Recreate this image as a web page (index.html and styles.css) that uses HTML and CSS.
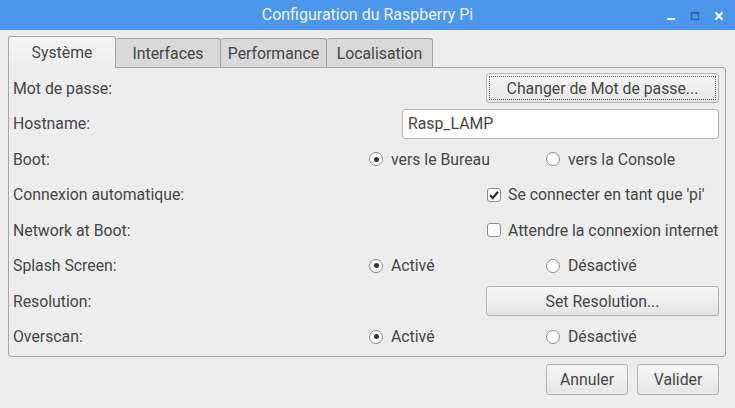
FILE: index.html
```html
<!DOCTYPE html>
<html lang="fr">
<head>
<meta charset="UTF-8" />
<title>Configuration du Raspberry Pi</title>
<link rel="stylesheet" href="styles.css">
</head>
<body>
<div class="window">
  <header class="titlebar">
    <span></span>
    <h1>Configuration du Raspberry Pi</h1>
    <div class="controls">
      <svg width="10" height="10" viewBox="0 0 10 10"><rect x="1" y="7" width="8" height="2" fill="#fff"/></svg>
      <svg width="10" height="10" viewBox="0 0 10 10"><rect x="1.5" y="1.5" width="7" height="7" fill="none" stroke="#3565a6" stroke-width="1.2"/><rect x="1" y="1" width="8" height="2" fill="#3565a6"/></svg>
      <svg width="10" height="10" viewBox="0 0 10 10"><path d="M1.5 1.5 L8.5 8.5 M8.5 1.5 L1.5 8.5" stroke="#fff" stroke-width="2"/></svg>
    </div>
  </header>

  <nav class="tabs">
    <div class="tab active">Système</div>
    <div class="tab">Interfaces</div>
    <div class="tab">Performance</div>
    <div class="tab">Localisation</div>
  </nav>

  <section class="panel">
    <div class="row">
      <span class="label">Mot de passe:</span>
      <button class="btn wide focused">Changer de Mot de passe...</button>
    </div>
    <div class="row">
      <span class="label">Hostname:</span>
      <input class="entry" type="text" value="Rasp_LAMP" />
    </div>
    <div class="row">
      <span class="label">Boot:</span>
      <div class="choices">
        <label class="radio"><span class="dot checked"></span>vers le Bureau</label>
        <label class="radio"><span class="dot"></span>vers la Console</label>
      </div>
    </div>
    <div class="row">
      <span class="label">Connexion automatique:</span>
      <label class="check"><span class="box checked">
        <svg width="12" height="12" viewBox="0 0 12 12"><path d="M2 6.2 L4.8 9 L10 2.8" fill="none" stroke="#333" stroke-width="2.2"/></svg>
      </span>Se connecter en tant que 'pi'</label>
    </div>
    <div class="row">
      <span class="label">Network at Boot:</span>
      <label class="check"><span class="box"></span>Attendre la connexion internet</label>
    </div>
    <div class="row">
      <span class="label">Splash Screen:</span>
      <div class="choices">
        <label class="radio"><span class="dot checked"></span>Activé</label>
        <label class="radio"><span class="dot"></span>Désactivé</label>
      </div>
    </div>
    <div class="row">
      <span class="label">Resolution:</span>
      <button class="btn wide">Set Resolution...</button>
    </div>
    <div class="row">
      <span class="label">Overscan:</span>
      <div class="choices">
        <label class="radio"><span class="dot checked"></span>Activé</label>
        <label class="radio"><span class="dot"></span>Désactivé</label>
      </div>
    </div>
  </section>

  <footer class="actions">
    <button class="btn small">Annuler</button>
    <button class="btn small">Valider</button>
  </footer>
</div>
</body>
</html>
```

FILE: styles.css
```css
* {
  box-sizing: border-box;
}
html, body {
  margin: 0;
  padding: 0;
  width: 735px;
  height: 408px;
  overflow: hidden;
  background: #ededed;
  font-family: Roboto, "Liberation Sans", sans-serif;
  font-size: 15.8px;
  color: #454545;
}

/* Title bar */
.titlebar {
  height: 30px;
  background: #4c96ec;
  display: grid;
  grid-template-columns: 1fr auto 1fr;
  align-items: center;
}
.titlebar h1 {
  margin: 0;
  font-size: 16px;
  font-weight: 400;
  color: #eef3fb;
  line-height: 30px;
}
.controls {
  display: flex;
  justify-content: flex-end;
  gap: 14px;
  padding-right: 11px;
  padding-top: 1px;
}
.controls svg {
  display: block;
}

/* Tabs */
.tabs {
  display: flex;
  align-items: flex-end;
  margin: 6px 0 0 8px;
  height: 31px;
}
.tab {
  height: 29px;
  border: 1px solid #a5a5a5;
  border-bottom: none;
  border-left: none;
  border-radius: 3px 3px 0 0;
  background: #d9d9d9;
  text-align: center;
  line-height: 30px;
}
.tab:nth-child(2) { width: 105px; }
.tab:nth-child(3) { width: 106px; }
.tab:nth-child(4) { width: 106px; }
.tab.active {
  width: 108px;
  height: 32px;
  border-left: 1px solid #a5a5a5;
  background: linear-gradient(#f6f6f6, #ededed);
  position: relative;
  z-index: 1;
  margin-bottom: -1px;
  line-height: 32px;
}

/* Panel */
.panel {
  width: 718px;
  margin-left: 8px;
  height: 290px;
  border: 1px solid #a5a5a5;
  border-radius: 0 3px 3px 3px;
  padding: 5px 6px 0 4px;
  display: flex;
  flex-direction: column;
  gap: 5.5px;
}
.row {
  display: flex;
  align-items: center;
  height: 30px;
}
.label {
  flex: 1;
}

/* Controls */
.btn {
  font-family: inherit;
  font-size: 15.8px;
  color: #454545;
  height: 30px;
  border: 1px solid #b4b4b4;
  border-radius: 3px;
  background: linear-gradient(#f7f7f7, #e6e6e6);
  padding: 0;
}
.btn.wide {
  width: 233px;
}
.btn.focused {
  outline: 1px dotted #555;
  outline-offset: -4px;
}
.entry {
  width: 317px;
  height: 30px;
  border: 1px solid #b4b4b4;
  border-radius: 3px;
  background: #fff;
  font-family: inherit;
  font-size: 15.8px;
  color: #454545;
  padding: 0 5px;
}
.choices {
  width: 350px;
  display: grid;
  grid-template-columns: 177px 1fr;
}
.radio, .check {
  display: flex;
  align-items: center;
}
.dot {
  width: 14px;
  height: 14px;
  border: 1px solid #8c8c8c;
  border-radius: 50%;
  background: #fff;
  margin-right: 8px;
  display: flex;
  align-items: center;
  justify-content: center;
}
.dot.checked::after {
  content: "";
  width: 5px;
  height: 5px;
  border-radius: 50%;
  background: #333;
}
.check {
  width: 233px;
  padding-left: 1px;
}
.box {
  width: 14px;
  height: 14px;
  border: 1px solid #8c8c8c;
  border-radius: 3px;
  background: #fff;
  margin-right: 7px;
  display: flex;
  align-items: center;
  justify-content: center;
}
.box svg {
  display: block;
}

/* Bottom buttons */
.actions {
  display: flex;
  justify-content: flex-end;
  gap: 9px;
  padding: 7px 16px 0 0;
}
.btn.small {
  width: 82px;
  height: 31px;
}
```
